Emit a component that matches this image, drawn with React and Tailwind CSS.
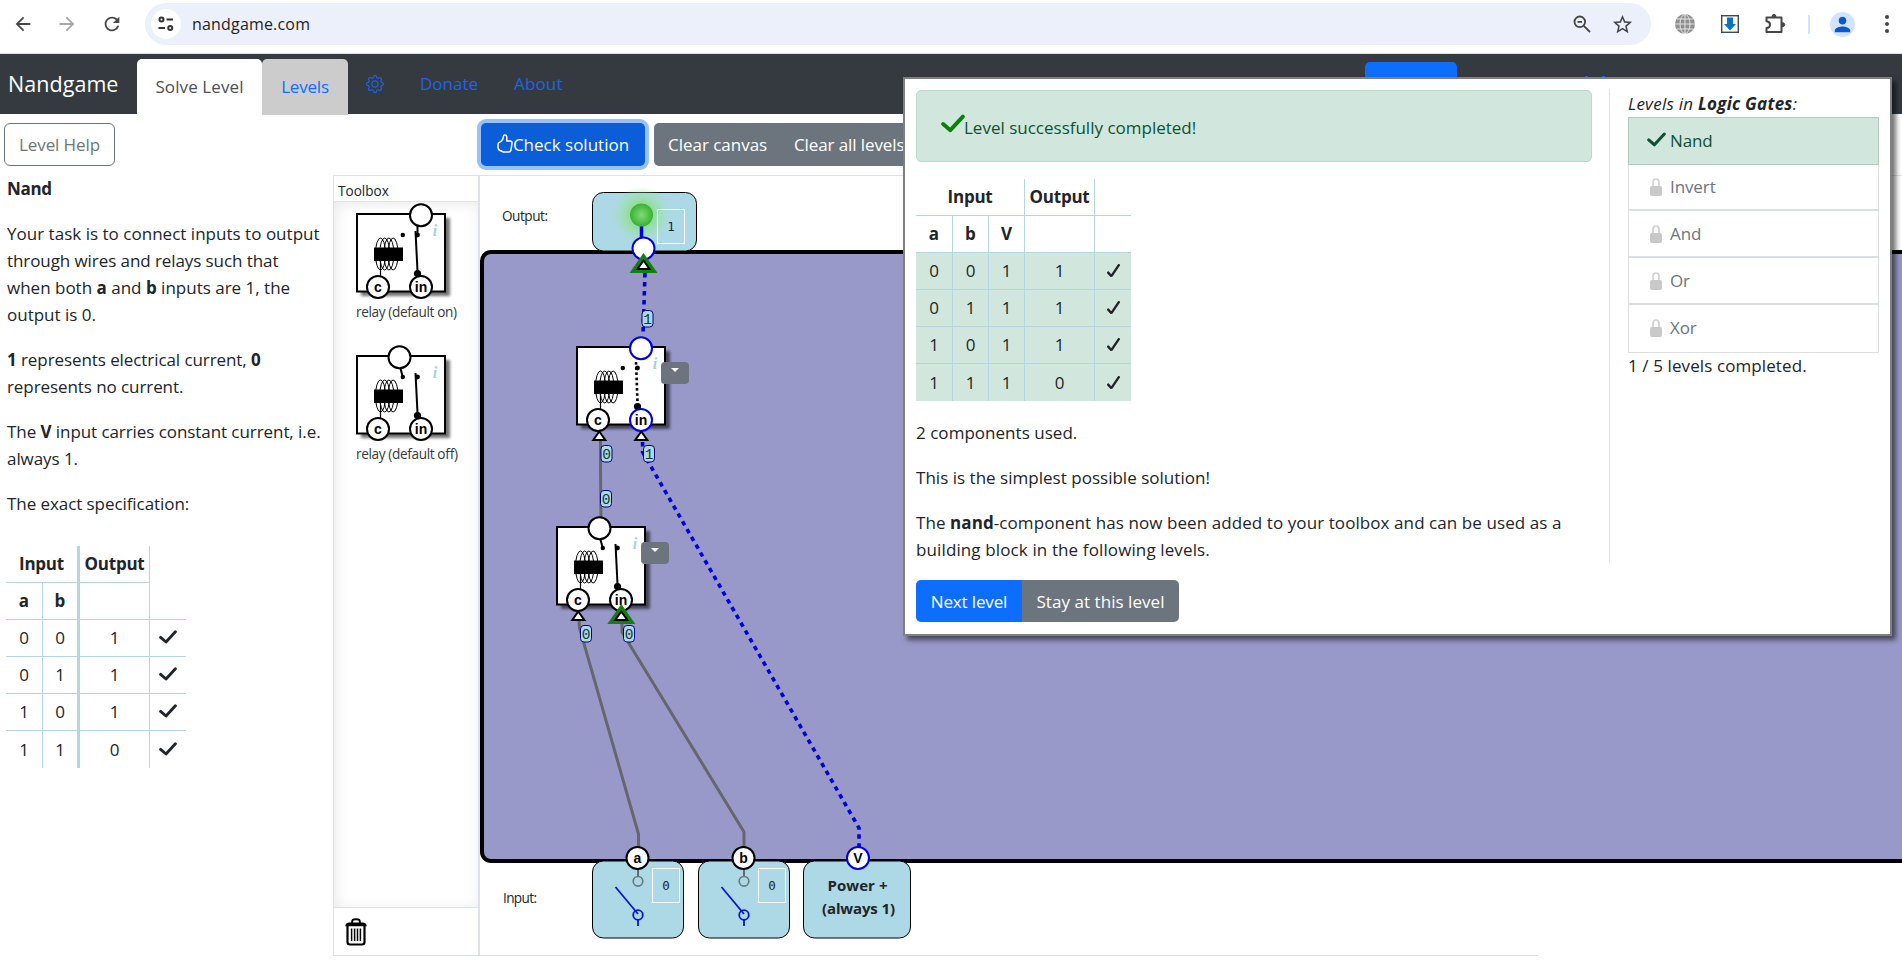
import React from "react";
import { MdArrowBack, MdArrowForward, MdRefresh, MdStarOutline, MdPerson } from "react-icons/md";
import { BsGear } from "react-icons/bs";

function Check({ className }) {
  return (
    <svg viewBox="0 0 18 14" className={className} fill="none" stroke="currentColor">
      <path d="M1.6 7.4 L7 12 L16.4 1.8" strokeWidth="2.9" strokeLinecap="round" strokeLinejoin="round" />
    </svg>
  );
}

function HeavyTick() {
  return (
    <svg viewBox="0 0 13 14" className="mx-auto h-[14px] w-[13px]" fill="none" stroke="#212529">
      <path d="M1.2 8.6 L4.4 12.2 L11.8 1.2" strokeWidth="2.4" strokeLinecap="round" strokeLinejoin="bevel" />
    </svg>
  );
}

function Lock() {
  return (
    <svg viewBox="0 0 12 18" className="h-[18px] w-[12px]" fill="none">
      <path d="M3 9V4.500Q3 1 6 1T9 4.500V9" stroke="#d2d2d2" strokeWidth="1.700" />
      <rect x="0" y="8" width="12" height="10" rx="2" fill="#c9c9c9" />
    </svg>
  );
}

/* ---------- browser toolbar ---------- */

function BrowserBar() {
  return (
    <div className="flex h-[54px] shrink-0 items-start border-b border-[#dfe1e5] bg-white text-[#474747]">
      <div className="flex h-[48px] w-[145px] items-center pl-[12px]">
        <MdArrowBack className="h-[22px] w-[22px]" />
        <MdArrowForward className="ml-[22px] h-[22px] w-[22px] text-[#a8a8a8]" />
        <MdRefresh className="ml-[23px] h-[22px] w-[22px]" />
      </div>
      <div className="mt-[3px] flex h-[42px] w-[1506px] items-center rounded-full bg-[#ebf0fa]">
        <div className="ml-[6px] flex h-[30px] w-[30px] items-center justify-center rounded-full bg-white">
          <svg viewBox="0 0 18 18" className="h-[18px] w-[18px]" fill="none" stroke="#333" strokeWidth="2">
            <circle cx="4.5" cy="4.5" r="2" />
            <path d="M9.5 4.5H16M1.5 13H8" />
            <circle cx="13.2" cy="13" r="2" />
          </svg>
        </div>
        <span className="ml-[11px] flex-1 text-[16px] leading-none tracking-[0.18px] text-[#1f1f1f]">nandgame.com</span>
        <svg viewBox="0 0 18 18" className="h-[18px] w-[18px]" fill="none" stroke="#444" strokeWidth="1.8">
          <circle cx="6.8" cy="6.8" r="5.3" />
          <path d="M10.8 10.8L17 17M4.5 6.8h4.6" />
        </svg>
        <MdStarOutline className="mr-[17px] ml-[20px] h-[23px] w-[23px] text-[#444]" />
      </div>
      <div className="flex h-[48px] flex-1 items-center">
        <svg viewBox="0 0 20 20" className="ml-[24px] h-[20px] w-[20px]">
          <circle cx="10" cy="10" r="10" fill="#8f8f8f" />
          <g fill="none" stroke="#e4e4e4" strokeWidth="1">
            <ellipse cx="10" cy="10" rx="5" ry="9.6" />
            <path d="M10 0v20M0 10h20M2 5h16M2 15h16" />
          </g>
        </svg>
        <svg viewBox="0 0 18 18" className="ml-[26px] h-[18px] w-[18px]">
          <rect x="0.7" y="0.7" width="16.6" height="16.6" fill="#fff" stroke="#3b4a55" strokeWidth="1.4" />
          <path d="M6 2.5h6v6.5h3L9 15.6 3 9h3z" fill="#0a74bd" />
        </svg>
        <svg viewBox="0 0 21 21" className="mb-[2px] ml-[26px] h-[21px] w-[21px]" fill="none" stroke="#474747" strokeWidth="2" strokeLinejoin="round">
          <path d="M1.500 4.500H16.500V19H1.500V15Q5 14.800 5 11.700T1.500 8.300Z" />
          <path d="M7 4.500Q7 1.200 9 1.200T11 4.500ZM16.500 9.500Q19.800 9.500 19.800 11.700T16.500 13.900Z" fill="#474747" strokeWidth="1" />
        </svg>
        <div className="ml-[22px] h-[19px] w-[2px] bg-[#d3e3fd]" />
        <div className="ml-[20px] flex h-[25px] w-[25px] items-center justify-center rounded-full bg-[#d3e3fd]">
          <MdPerson className="h-[23px] w-[23px] text-[#0b57d0]" />
        </div>
        <svg viewBox="0 0 4 18" className="ml-[30px] h-[18px] w-[4px]" fill="#474747">
          <circle cx="2" cy="2" r="2" />
          <circle cx="2" cy="9" r="2" />
          <circle cx="2" cy="16" r="2" />
        </svg>
      </div>
    </div>
  );
}

/* ---------- site navigation ---------- */

function NavBar() {
  return (
    <div className="flex h-[60px] shrink-0 bg-[#343a40] text-[#1f63e8]">
      <span className="w-[137px] pt-[14px] pl-[8px] text-[21.5px] leading-[32px] tracking-[0.05px] text-white">Nandgame</span>
      <div className="mt-[5px] flex h-[55px] w-[125px] items-center justify-center rounded-t-[5px] bg-white text-[17px] tracking-[0.1px] text-[#495057]">
        Solve Level
      </div>
      <div className="mt-[5px] flex h-[56px] w-[86px] items-center justify-center rounded-t-[5px] bg-[#ccc] text-[17px] tracking-[-0.2px] text-[#0d6efd]">
        Levels
      </div>
      <BsGear className="mt-[21px] ml-[18px] h-[18px] w-[18px]" />
      <span className="mt-[16px] ml-[36px] w-[94px] text-[17px] leading-[27px]">Donate</span>
      <span className="mt-[16px] w-[60px] text-[17px] leading-[27px] tracking-[0.15px]">About</span>
      <div className="mt-[8px] ml-[791px] h-[44px] w-[92px] rounded-[5px] bg-[#0d6efd]" />
      <div className="mt-[22px] ml-[128px] h-[4px] w-[3px] bg-[#1f63e8]" />
      <div className="mt-[22px] ml-[14px] h-[4px] w-[3px] bg-[#1f63e8]" />
    </div>
  );
}

/* ---------- circuit drawing parts ---------- */

function Pin({ x, y, label, color = "#000" }) {
  return (
    <g>
      <circle cx={x} cy={y} r="11" fill="#fff" stroke={color} strokeWidth="2" />
      {label && (
        <text x={x} y={y + 4.6} textAnchor="middle" fontSize="14" fontWeight="700" fontFamily="Liberation Sans, sans-serif" fill="#000">
          {label}
        </text>
      )}
    </g>
  );
}

function Relay({ x, y, on, live }) {
  const out = on ? 65 : 43.5;
  const color = live ? "#0000dd" : "#000";
  return (
    <g transform={`translate(${x} ${y})`}>
      <rect x="5" y="5" width="89" height="78" fill="#000" opacity="0.55" filter="url(#soft)" />
      <rect x="1" y="1" width="88" height="77.5" fill="#fff" stroke="#000" strokeWidth="2" />
      <g fill="none" stroke="#000" strokeWidth="1">
        {[24.5, 28.7, 32.9, 37.1].map((cx) => (
          <ellipse key={cx} cx={cx} cy="41" rx="5" ry="16" />
        ))}
        <path d="M24.5 48V64" strokeWidth="1.2" />
      </g>
      <rect x="18" y="34.5" width="29" height="13.5" />
      <circle cx="46.8" cy="22" r="2.2" />
      <circle cx="61.5" cy="22" r="2.4" />
      <path
        d={live ? "M60 16L61.5 56" : "M59.5 18L61.5 58"}
        stroke="#000"
        strokeWidth={live ? 2.6 : 2}
        strokeDasharray={live ? "2.6 2.6" : undefined}
      />
      {!live && <path d={on ? "M61.5 12V22" : "M44.3 13L46.8 22"} stroke="#000" strokeWidth="2" />}
      <circle cx="61.5" cy="60.5" r="3.6" />
      <text x="79" y="22.500" textAnchor="middle" fontSize="16" fontStyle="italic" fontWeight="700" fontFamily="Liberation Serif, serif" fill="#a6d3e0">
        i
      </text>
      <Pin x={out} y={2.3} color={color} />
      <Pin x={22} y={74} label="c" />
      <Pin x={65} y={74} label="in" color={color} />
    </g>
  );
}

function Triangle({ x, y, active }) {
  return (
    <g>
      {active && <path d={`M${x} ${y - 7}L${x + 14} ${y + 13}H${x - 14}Z`} fill="#118011" />}
      <path d={`M${x} ${y + 0.5}L${x + 6} ${y + 9}H${x - 6}Z`} fill="#fff" stroke="#000" strokeWidth="2" />
    </g>
  );
}

function Value({ x, y, v }) {
  return (
    <g>
      <rect x={x - 5.5} y={y - 8} width="11" height="16.5" rx="3.5" fill="#add8e6" stroke="#000080" strokeWidth="1" />
      <text x={x} y={y + 5} textAnchor="middle" fontSize="14.5" fontFamily="Liberation Mono, monospace" fill="#123a30">
        {v}
      </text>
    </g>
  );
}

function Menu({ x, y }) {
  return (
    <g>
      <rect x={x} y={y} width="28" height="22" rx="4" fill="#6c757d" />
      <path d={`M${x + 10} ${y + 6}h8l-4 4z`} fill="#fff" />
    </g>
  );
}

function ValueBox({ x, y, w = 27, v }) {
  return (
    <g>
      <rect x={x} y={y} width={w} height="34" fill="none" stroke="#fff" strokeWidth="1" />
      <text x={x + w / 2} y={y + 21.5} textAnchor="middle" fontSize="12.5" fontFamily="DejaVu Sans Mono, monospace" fill="#212529">
        {v}
      </text>
    </g>
  );
}

function SwitchBox({ x, label }) {
  return (
    <g>
      <rect x={x + 0.5} y="861" width="91" height="77" rx="11" fill="#add8e6" stroke="#000" />
      <path d={`M${x + 46} 868V876`} stroke="#5f6b70" strokeWidth="2" />
      <circle cx={x + 46} cy="881.3" r="4.8" fill="none" stroke="#68777d" strokeWidth="1.6" />
      <g stroke="#0b14cf" strokeWidth="1.8" fill="none">
        <path d={`M${x + 23.5} 887L${x + 46} 914M${x + 46} 920V926`} />
        <circle cx={x + 46} cy="915" r="4.8" />
      </g>
      <ValueBox x={x + 60.5} y={868.5} v="0" />
      <Pin x={x + 45.5} y={858} label={label} />
    </g>
  );
}

function Circuit() {
  return (
    <svg viewBox="480 176 1422 779" className="block h-[779px] w-[1422px] shrink-0" fontFamily="Open Sans, sans-serif">
      <defs>
        <filter id="soft" x="-20%" y="-20%" width="140%" height="140%">
          <feGaussianBlur stdDeviation="1.6" />
        </filter>
        <radialGradient id="led">
          <stop offset="0" stopColor="#7fdc76" />
          <stop offset="1" stopColor="#3cb034" />
        </radialGradient>
        <radialGradient id="glow">
          <stop offset="0.3" stopColor="#7fe07a" stopOpacity="0.9" />
          <stop offset="1" stopColor="#a0e8a0" stopOpacity="0" />
        </radialGradient>
      </defs>

      <text x="502" y="221" fontSize="13.6" textLength="46" fill="#212529">Output:</text>
      <text x="503" y="903" fontSize="13.6" textLength="34" fill="#212529">Input:</text>

      <rect x="482" y="252" width="1440" height="609" rx="9" fill="#9999c9" stroke="#000" strokeWidth="4" />
      <rect x="592.5" y="192.5" width="104" height="58.5" rx="11" fill="#add8e6" stroke="#000" />
      <circle cx="641.5" cy="215" r="29" fill="url(#glow)" />
      <path d="M641.5 225V240" stroke="#0000dd" strokeWidth="3.5" />
      <circle cx="641.5" cy="215" r="11.5" fill="url(#led)" />
      <ValueBox x={657.5} y={209.5} v="1" />

      <g fill="none" stroke="#666670" strokeWidth="3">
        <path d="M600.500 441V470L601 520" />
        <path d="M579 620L579.5 628L638.5 834V850" />
        <path d="M622 620V632L744 832V850" />
      </g>
      <g fill="none" stroke="#0000dd" strokeWidth="3.6" strokeDasharray="4.5 4.5">
        <path d="M645 273L643 335" />
        <path d="M642.6 442V452L859 828V848" />
      </g>

      <Relay x={576} y={346} on live />
      <Relay x={556} y={526} />
      <Menu x={661} y={362} />
      <Menu x={641} y={542} />

      <Pin x={643.5} y={248.5} color="#0000dd" />
      <Triangle x={643.5} y={260} active />
      <Triangle x={599.3} y={431} />
      <Triangle x={641.3} y={431} />
      <Triangle x={578.3} y={611} />
      <Triangle x={621.3} y={611} active />

      <Value x={647.5} y={318.5} v="1" />
      <Value x={606.5} y={453.5} v="0" />
      <Value x={649} y={453.5} v="1" />
      <Value x={606} y={498.5} v="0" />
      <Value x={586} y={633.5} v="0" />
      <Value x={629} y={633.5} v="0" />

      <SwitchBox x={592} label="a" />
      <SwitchBox x={698} label="b" />
      <rect x="803.5" y="861" width="107" height="77" rx="11" fill="#add8e6" stroke="#000" />
      <text x="857.5" y="891" textAnchor="middle" fontSize="15" fontWeight="700" textLength="60" fill="#212529">Power +</text>
      <text x="858.5" y="914" textAnchor="middle" fontSize="15" fontWeight="700" textLength="73" fill="#212529">(always 1)</text>
      <Pin x={858} y={858} label="V" color="#0000dd" />
    </svg>
  );
}

/* ---------- left column ---------- */

const ROWS = [
  [0, 0, 1],
  [0, 1, 1],
  [1, 0, 1],
  [1, 1, 0],
];

function SpecTable() {
  return (
    <table className="mt-[29px] ml-[6px] w-[180px] table-fixed border-separate border-spacing-0 text-center text-[17px] leading-[36px]">
      <colgroup>
        <col className="w-[37px]" />
        <col className="w-[34px]" />
        <col className="w-[73px]" />
        <col className="w-[36px]" />
      </colgroup>
      <tbody>
        <tr className="h-[37px] font-bold">
          <td colSpan={2} className="border-b border-[#b5d6de] tracking-[-0.25px]">Input</td>
          <td className="border-r border-b border-l-3 border-[#b5d6de] tracking-[-0.25px]">Output</td>
          <td />
        </tr>
        <tr className="h-[37px] font-bold">
          <td className="border-r border-b border-[#b5d6de]">a</td>
          <td className="border-b border-[#b5d6de]">b</td>
          <td className="border-r border-b border-l-3 border-[#b5d6de]" />
          <td className="border-b border-[#b5d6de]" />
        </tr>
        {ROWS.map((r, i) => (
          <tr key={i} className="h-[37px]">
            <td className={"border-r border-[#b5d6de] " + (i < 3 ? "border-b" : "")}>{r[0]}</td>
            <td className={"border-[#b5d6de] " + (i < 3 ? "border-b" : "")}>{r[1]}</td>
            <td className={"border-r border-l-3 border-[#b5d6de] " + (i < 3 ? "border-b" : "")}>{r[2]}</td>
            <td className={"border-[#b5d6de] " + (i < 3 ? "border-b" : "")}>
              <Check className="mx-auto mb-[2px] block h-[14px] w-[18px]" />
            </td>
          </tr>
        ))}
      </tbody>
    </table>
  );
}

function Instructions() {
  return (
    <div className="w-[333px] shrink-0 text-[17px] leading-[27px] text-[#212529]">
      <div className="space-y-[18px] pl-[7px] whitespace-nowrap">
        <p className="font-bold tracking-[-0.3px]">Nand</p>
        <p>
          <span className="tracking-[0.02px]">Your task is to connect inputs to output</span>
          <br />
          <span className="tracking-[-0.08px]">through wires and relays such that</span>
          <br />
          when both <b>a</b> and <b>b</b> inputs are 1, the
          <br />
          output is 0.
        </p>
        <p className="tracking-[-0.08px]">
          <b>1</b> represents electrical current, <b>0</b>
          <br />
          represents no current.
        </p>
        <p className="tracking-[-0.07px]">
          The <b>V</b> input carries constant current, i.e.
          <br />
          always 1.
        </p>
        <p className="tracking-[-0.07px]">The exact specification:</p>
      </div>
      <SpecTable />
    </div>
  );
}

function Toolbox() {
  return (
    <div className="flex h-[781px] w-[146px] shrink-0 flex-col border border-[#dee2e6] text-[#212529]">
      <div className="h-[26px] border-b border-[#e3e3e3] pl-[4px] text-[13.6px] leading-[30px]">Toolbox</div>
      <div className="flex-1 shadow-[inset_2px_2px_14px_rgba(0,0,0,0.09)]">
        <svg viewBox="334 202 144 290" className="block h-[290px] w-[144px]" fontFamily="Open Sans, sans-serif" fontSize="13.6" fill="#000">
          <Relay x={356} y={213} on />
          <text x="356" y="317" textLength="101" fill="#333a40">relay (default on)</text>
          <Relay x={356} y={355} />
          <text x="356" y="459" textLength="102" fill="#333a40">relay (default off)</text>
        </svg>
      </div>
      <div className="h-[48px] border-t border-[#dee2e6] pt-[10px] pl-[10px]">
        <svg viewBox="0 0 24 28" className="h-[28px] w-[24px]" fill="none" stroke="#000">
          <path d="M8 5.5C8 1.5 9 1.2 12 1.2S16 1.5 16 5.5" strokeWidth="2" />
          <path d="M2.2 7.5C2.6 5.6 3.5 5.2 5 5.2H19C20.500 5.200 21.400 5.600 21.800 7.500Z" fill="#000" strokeWidth="1.6" />
          <path d="M3.500 8V24Q3.500 26.500 6 26.500H18Q20.500 26.500 20.500 24V8" strokeWidth="2.200" />
          <path d="M7.600 10.500V23M10.600 10.500V23M13.500 10.500V23M16.400 10.500V23" strokeWidth="1.500" />
        </svg>
      </div>
    </div>
  );
}

function Actions() {
  return (
    <div className="flex h-[61px] shrink-0 items-start pt-[9px] text-[17px] whitespace-nowrap">
      <div className="ml-[4px] flex h-[43px] w-[111px] items-center justify-center rounded-[6px] border border-[#6c757d] tracking-[-0.1px] text-[#6c757d]">
        Level Help
      </div>
      <div className="ml-[366px] flex h-[43px] w-[164px] items-center justify-center rounded-[5px] bg-[#0b5ed7] text-white shadow-[0_0_0_4px_#98c0fb]">
        <svg viewBox="0 0 16 19" className="mb-[2px] h-[19px] w-[16px]" fill="none" stroke="#fff" strokeWidth="1.500" strokeLinejoin="round">
          <path d="M7.800 1Q9.800 1 9.800 3.200V7H13Q15.200 7 15 9.200L14 16Q13.500 18 11.500 18H6.500L3 16.500Q1 15.500 1 13.500V10.500Q1 9 2.500 8.400Q6.200 6.500 6.400 2.500Q6.600 1 7.800 1Z" />
        </svg>
        Check solution
      </div>
      <div className="ml-[9px] flex h-[43px] w-[400px] items-center rounded-[5px] bg-[#6c757d] text-white">
        <span className="w-[126px] pl-[14px] tracking-[-0.02px]">Clear canvas</span>
        <span className="pl-[14px] tracking-[-0.1px]">Clear all levels</span>
      </div>
    </div>
  );
}

/* ---------- completion dialog ---------- */

function ResultTable() {
  return (
    <table className="mt-[17px] w-[215px] table-fixed border-separate border-spacing-0 text-center text-[17px] leading-[36px]">
      <colgroup>
        <col className="w-[37px]" />
        <col className="w-[36px]" />
        <col className="w-[36px]" />
        <col className="w-[70px]" />
        <col className="w-[36px]" />
      </colgroup>
      <tbody>
        <tr className="h-[37px] font-bold tracking-[-0.25px]">
          <td colSpan={3} className="border-r border-b border-[#b5d6de]">Input</td>
          <td className="border-r border-b border-[#b5d6de]">Output</td>
          <td className="border-b border-[#b5d6de]" />
        </tr>
        <tr className="h-[37px] font-bold">
          <td className="border-r border-b border-[#b5d6de]">a</td>
          <td className="border-r border-b border-[#b5d6de]">b</td>
          <td className="border-r border-b border-[#b5d6de]">V</td>
          <td className="border-r border-b border-[#b5d6de]" />
          <td className="border-b border-[#b5d6de]" />
        </tr>
        {ROWS.map((r, i) => (
          <tr key={i} className="h-[37px] bg-[#d1e7dd]">
            {[r[0], r[1], 1, r[2]].map((v, j) => (
              <td key={j} className={"border-r border-[#b5d6de] " + (i < 3 ? "border-b" : "")}>{v}</td>
            ))}
            <td className={"border-[#b5d6de] " + (i < 3 ? "border-b" : "")}>
              <HeavyTick />
            </td>
          </tr>
        ))}
      </tbody>
    </table>
  );
}

function Dialog() {
  return (
    <div className="absolute top-[77px] left-[903px] flex h-[559px] w-[989px] border-2 border-[#808080] bg-white text-[17px] leading-[27px] whitespace-nowrap text-[#212529] shadow-[4px_4px_5px_rgba(0,0,0,0.55)]">
      <div className="w-[686px] pt-[11px] pl-[11px]">
        <div className="flex h-[72px] w-[676px] items-center rounded-[5px] border border-[#badbcc] bg-[#d1e7dd] pl-[24px] text-[#0f5132]">
          <Check className="mb-[5px] h-[19px] w-[24px] text-[#0a800a]" />
          <span className="mt-[3px] -ml-px">Level successfully completed!</span>
        </div>
        <ResultTable />
        <p className="mt-[18px] tracking-[0.03px]">2 components used.</p>
        <p className="mt-[18px] tracking-[0.02px]">This is the simplest possible solution!</p>
        <p className="mt-[18px]">
          <span className="tracking-[0.08px]">
            The <b>nand</b>-component has now been added to your toolbox and can be used as a
          </span>
          <br />
          <span className="tracking-[0.12px]">building block in the following levels.</span>
        </p>
        <div className="mt-[17px] flex h-[42px] items-center tracking-[-0.15px] text-white">
          <div className="flex h-full w-[106px] items-center justify-center rounded-l-[5px] bg-[#0d6efd]">Next level</div>
          <div className="flex h-full w-[157px] items-center justify-center rounded-r-[5px] bg-[#6c757d] tracking-[0.05px]">Stay at this level</div>
        </div>
      </div>
      <div className="mt-[10px] ml-[18px] h-[474px] w-px bg-[#dee2e6]" />
      <div className="pt-[11px] pl-[18px]">
        <p className="tracking-[0.25px] italic">
          Levels in <b>Logic Gates</b>:
        </p>
        <div className="w-[251px] border border-[#dcdfe1]">
          <div className="-m-px flex h-[48px] items-center border border-[#b0cabd] bg-[#d1e7dd] pb-[2px] pl-[18px] tracking-[-0.1px] text-[#0f5132]">
            <Check className="mb-[2px] h-[15px] w-[19px]" />
            <span className="pl-[4px]">Nand</span>
          </div>
          {["Invert", "And", "Or", "Xor"].map((n, i) => (
            <div key={n} className={"flex h-[47px] items-center pl-[21px] tracking-[-0.1px] text-[#6c757d] " + (i < 3 ? "border-b-2 border-[#dcdfe1]" : "pb-[2px]")}>
              <Lock />
              <span className="pl-[8px]">{n}</span>
            </div>
          ))}
        </div>
        <p className="-mt-px tracking-[0.1px]">1 / 5 levels completed.</p>
      </div>
    </div>
  );
}

export default function App() {
  return (
    <div className="relative flex h-[960px] w-[1902px] flex-col overflow-hidden bg-white font-['Open_Sans','Noto_Sans',sans-serif]">
      <BrowserBar />
      <NavBar />
      <Actions />
      <div className="flex h-[785px]">
        <Instructions />
        <Toolbox />
        <div className="flex h-[781px] w-[1423px] flex-col border-t border-l border-[#dee2e6]">
          <Circuit />
          <div className="h-px w-[1058px] bg-[#dee2e6]" />
        </div>
      </div>
      <Dialog />
    </div>
  );
}
